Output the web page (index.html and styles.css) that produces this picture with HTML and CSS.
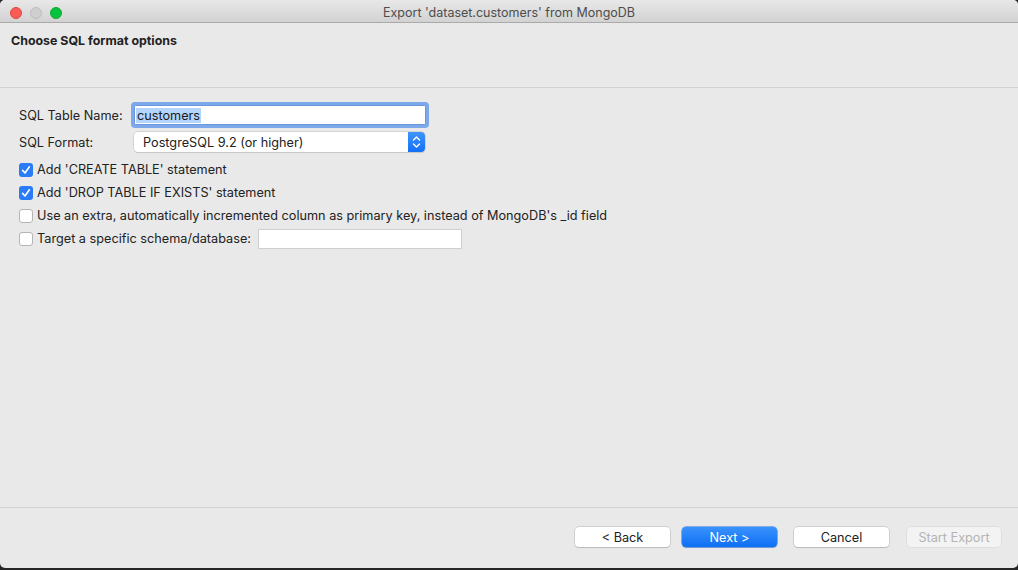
FILE: index.html
```html
<!DOCTYPE html>
<html>
<head>
<meta charset="utf-8">
<title>Export</title>
<link rel="stylesheet" href="styles.css">
</head>
<body>
<div class="window">
  <div class="titlebar">
    <div class="lights">
      <span class="light red"></span>
      <span class="light gray"></span>
      <span class="light green"></span>
    </div>
    <div class="title">Export 'dataset.customers' from MongoDB</div>
    <div></div>
  </div>
  <div class="header">Choose SQL format options</div>
  <div class="content">
    <div class="row row-name">
      <span class="label">SQL Table Name:</span>
      <div class="textfield focused"><span class="selected">customers</span></div>
    </div>
    <div class="row row-format">
      <span class="label">SQL Format:</span>
      <div class="select">
        <span class="select-text">PostgreSQL 9.2 (or higher)</span>
        <span class="stepper">
          <svg width="9" height="14" viewBox="0 0 9 14"><path d="M1.5 5 L4.5 2 L7.5 5" fill="none" stroke="#fff" stroke-width="1.4" stroke-linecap="round" stroke-linejoin="round"/><path d="M1.5 9 L4.5 12 L7.5 9" fill="none" stroke="#fff" stroke-width="1.4" stroke-linecap="round" stroke-linejoin="round"/></svg>
        </span>
      </div>
    </div>
    <div class="checks">
      <div class="check-row">
        <span class="box checked"><svg width="14" height="14" viewBox="0 0 14 14"><path d="M3.6 7.4 L6 10 L10.4 3.8" fill="none" stroke="#fff" stroke-width="1.6" stroke-linecap="round" stroke-linejoin="round"/></svg></span>
        <span>Add 'CREATE TABLE' statement</span>
      </div>
      <div class="check-row">
        <span class="box checked"><svg width="14" height="14" viewBox="0 0 14 14"><path d="M3.6 7.4 L6 10 L10.4 3.8" fill="none" stroke="#fff" stroke-width="1.6" stroke-linecap="round" stroke-linejoin="round"/></svg></span>
        <span>Add 'DROP TABLE IF EXISTS' statement</span>
      </div>
      <div class="check-row">
        <span class="box"></span>
        <span>Use an extra, automatically incremented column as primary key, instead of MongoDB's _id field</span>
      </div>
      <div class="check-row">
        <span class="box"></span>
        <span>Target a specific schema/database:</span>
        <div class="textfield small"></div>
      </div>
    </div>
  </div>
  <div class="footer">
    <button class="btn back">&lt; Back</button>
    <button class="btn primary">Next &gt;</button>
    <button class="btn cancel">Cancel</button>
    <button class="btn disabled">Start Export</button>
  </div>
</div>
</body>
</html>
```
FILE: styles.css
```css
html, body {
  margin: 0;
  padding: 0;
  background: #262626;
}
body {
  width: 1018px;
  height: 570px;
  overflow: hidden;
  font-family: Inter, "Liberation Sans", Arial, sans-serif;
  font-size: 12.7px;
  color: #222;
}
.window {
  height: 568px;
  background: #e9e9e9;
  display: flex;
  flex-direction: column;
  border-radius: 5px;
  overflow: hidden;
}
.titlebar {
  height: 23px;
  box-sizing: border-box;
  background: linear-gradient(#e8e8e8, #d2d2d2);
  border-bottom: 1px solid #aaaaaa;
  display: grid;
  grid-template-columns: 1fr auto 1fr;
  align-items: center;
}
.lights {
  display: flex;
  gap: 8px;
  padding-left: 10px;
  padding-top: 3px;
}
.light {
  width: 12px;
  height: 12px;
  border-radius: 50%;
  box-sizing: border-box;
}
.red { background: #fc5a56; border: 0.5px solid #e2463f; }
.gray { background: #cfcfcf; border: 0.5px solid #bdbdbd; }
.green { background: #05c33c; border: 0.5px solid #10a92d; }
.title {
  font-size: 12.5px;
  color: #4d4d4d;
  padding-top: 2px;
}
.header {
  height: 65px;
  box-sizing: border-box;
  border-bottom: 1px solid #d2d2d2;
  padding: 10px 0 0 11px;
  font-weight: 700;
  font-size: 12.4px;
  color: #222;
}
.content {
  flex: 1;
  padding: 14px 0 0 19px;
  display: flex;
  flex-direction: column;
}
.row {
  display: flex;
  align-items: center;
}
.row-name { height: 26px; }
.row-format { height: 20px; margin-top: 4px; }
.label {
  width: 112px;
  flex: none;
}
.textfield {
  background: #fff;
  box-sizing: border-box;
  height: 20px;
}
.textfield.focused {
  width: 298px;
  height: 26px;
  border: 3px solid #7da8ea;
  border-radius: 4px;
  padding: 0 0 0 2px;
  display: flex;
  align-items: center;
  box-shadow: inset 0 0 0 1px #6b97de;
}
.selected {
  background: #b3d4fb;
  line-height: 15px;
  padding: 0 1px;
  color: #1a1a1a;
}
.select {
  margin-left: 3px;
  width: 291px;
  height: 20px;
  box-sizing: border-box;
  background: #fff;
  border-radius: 4px;
  box-shadow: 0 0 0 0.5px #c0c0c0, 0 1px 1px rgba(0,0,0,0.12);
  display: flex;
  align-items: center;
  overflow: hidden;
}
.select-text {
  flex: 1;
  padding-left: 9px;
}
.stepper {
  width: 17px;
  height: 20px;
  background: linear-gradient(#3f95fb, #1470f6);
  display: flex;
  align-items: center;
  justify-content: center;
}
.checks {
  margin-top: 6px;
  display: flex;
  flex-direction: column;
}
.check-row {
  height: 23px;
  display: flex;
  align-items: center;
}
.box {
  width: 14px;
  height: 14px;
  box-sizing: border-box;
  border-radius: 3px;
  background: #fff;
  border: 1px solid #b5b5b5;
  margin-right: 4px;
  flex: none;
  display: flex;
}
.box.checked {
  background: #2a7cf6;
  border: none;
}
.textfield.small {
  width: 204px;
  margin-left: 7px;
  border: 1px solid #cfcfcf;
}
.footer {
  height: 61px;
  box-sizing: border-box;
  border-top: 1px solid #d2d2d2;
  display: flex;
  justify-content: flex-end;
  padding: 19px 17px 0 0;
}
.btn {
  width: 95px;
  height: 20px;
  box-sizing: border-box;
  font-family: Inter, "Liberation Sans", Arial, sans-serif;
  font-size: 12.7px;
  color: #222;
  background: #fff;
  border: none;
  border-radius: 4px;
  box-shadow: 0 0 0 0.5px #b8b8b8, 0 1px 1px rgba(0,0,0,0.18);
  padding: 0;
  flex: none;
}
.btn.primary {
  margin-left: 12px;
  background: linear-gradient(#3a92fb, #0d6ff5);
  color: #fff;
  box-shadow: 0 0 0 0.5px #1c6fe0, 0 1px 1px rgba(0,0,0,0.15);
}
.btn.cancel { margin-left: 17px; }
.btn.disabled {
  margin-left: 18px;
  width: 94px;
  background: #f3f3f3;
  color: #b3b3b3;
  box-shadow: 0 0 0 0.5px #d4d4d4;
}
```
